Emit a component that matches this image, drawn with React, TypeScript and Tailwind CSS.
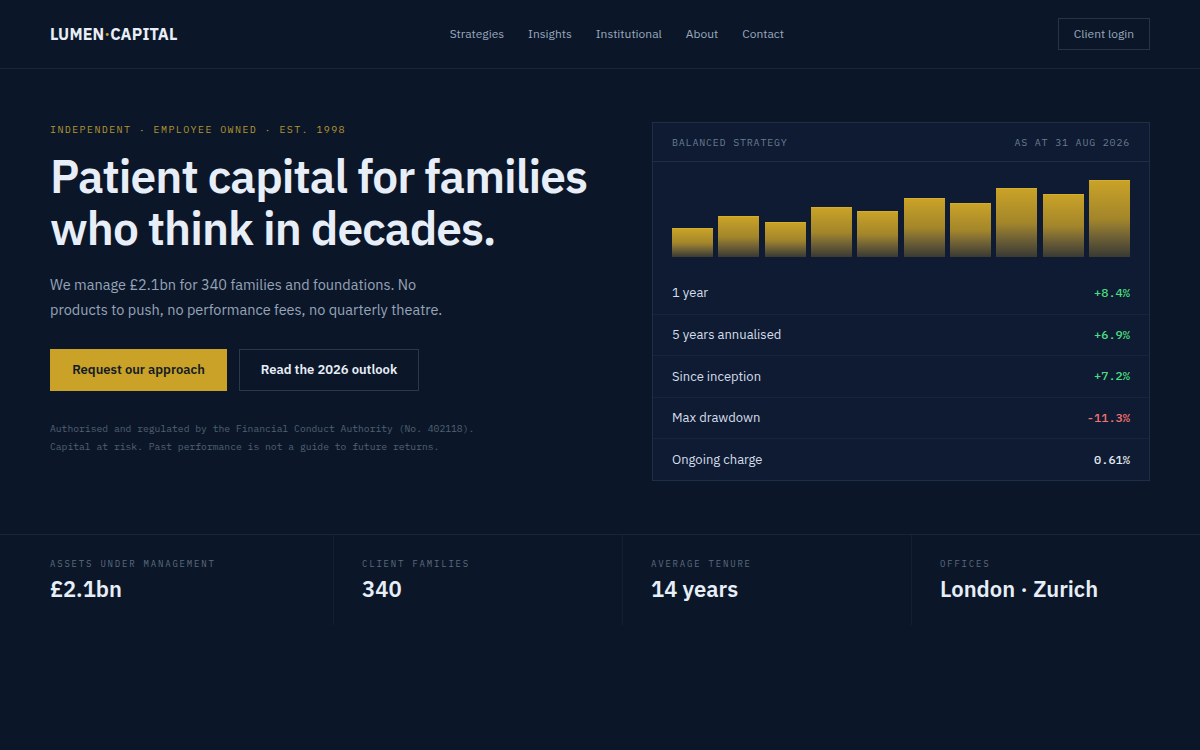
const sans = { fontFamily: '"IBM Plex Sans", Roboto, "Noto Sans", sans-serif' };
const mono = { fontFamily: '"IBM Plex Mono", "DejaVu Sans Mono", "Liberation Mono", monospace' };

const navLinks = ['Strategies', 'Insights', 'Institutional', 'About', 'Contact'];

// monthly bar heights for the balanced strategy chart (px)
const bars = [29, 41, 35, 50, 46, 59, 54, 69, 63, 77];

const returns = [
  { label: '1 year', value: '+8.4%', tone: 'text-[#4ade80]' },
  { label: '5 years annualised', value: '+6.9%', tone: 'text-[#4ade80]' },
  { label: 'Since inception', value: '+7.2%', tone: 'text-[#4ade80]' },
  { label: 'Max drawdown', value: '-11.3%', tone: 'text-[#f87171]' },
  { label: 'Ongoing charge', value: '0.61%', tone: 'text-[#e2e8f0]' },
];

const stats = [
  { label: 'Assets under management', value: '£2.1bn' },
  { label: 'Client families', value: '340' },
  { label: 'Average tenure', value: '14 years' },
  { label: 'Offices', value: 'London · Zurich' },
];

function Header() {
  return (
    <header className="h-[69px] border-b border-[#1a2638] flex items-center px-[50px]">
      <div className="text-[16px] font-bold tracking-[0.01em] text-[#e8eef7]">
        LUMEN<span className="text-[#c9a227]">·</span>CAPITAL
      </div>
      <nav className="flex items-center gap-[24px] text-[12px] text-[#9aa8bd] ml-[272px]">
        {navLinks.map((l) => (
          <a key={l} href="#" className="hover:text-white">
            {l}
          </a>
        ))}
      </nav>
      <button className="ml-auto h-[32px] w-[92px] border border-[#26344a] text-[12px] text-[#9aa8bd]">
        Client login
      </button>
    </header>
  );
}

function StrategyCard() {
  return (
    <div className="w-[498px] self-start border border-[#1f2e47] bg-[#0e1b32]">
      <div className="h-[39px] flex items-center justify-between px-[19px] border-b border-[#1f2e47] text-[10px] tracking-[0.08em] text-[#6b7a90]" style={mono}>
        <span>BALANCED STRATEGY</span>
        <span>AS AT 31 AUG 2026</span>
      </div>
      <div className="h-[110px] px-[19px] pt-[17px] pb-[15px] flex items-end gap-[5.5px]">
        {bars.map((h, i) => (
          <div
            key={i}
            className="flex-1 border-t border-[#d4ad2c] bg-gradient-to-b from-[#c9a227] via-[#a3862a] to-[#3a3a33]"
            style={{ height: h }}
          />
        ))}
      </div>
      {returns.map((r, i) => (
        <div
          key={r.label}
          className={`h-[41.6px] flex items-center justify-between px-[19px] ${i > 0 ? 'border-t border-[#17243a]' : ''}`}
        >
          <span className="text-[13px] text-[#d5deea]">{r.label}</span>
          <span className={`text-[12px] font-medium ${r.tone}`} style={mono}>
            {r.value}
          </span>
        </div>
      ))}
    </div>
  );
}

function Hero() {
  return (
    <section className="flex items-start justify-between px-[50px] pt-[53px] h-[465px]">
      <div className="w-[560px]">
        <div className="text-[10px] tracking-[0.14em] text-[#b4952f]" style={mono}>
          INDEPENDENT · EMPLOYEE OWNED · EST. 1998
        </div>
        <h1 className="mt-[13px] text-[46px] leading-[52px] font-semibold tracking-[-0.02em] text-[#e8eef7]">
          Patient capital for families
          <br />
          who think in decades.
        </h1>
        <p className="mt-[18px] text-[14.5px] leading-[25px] text-[#97a4b8] w-[400px]">
          We manage £2.1bn for 340 families and foundations. No products to push, no performance fees, no quarterly theatre.
        </p>
        <div className="mt-[27px] flex gap-[12px]">
          <button className="h-[42px] w-[177px] bg-[#c9a227] text-[13px] font-semibold text-[#131a26]">
            Request our approach
          </button>
          <button className="h-[42px] w-[180px] border border-[#2a384e] text-[13px] font-semibold text-[#e8eef7]">
            Read the 2026 outlook
          </button>
        </div>
        <p className="mt-[29px] text-[9.7px] leading-[18px] text-[#526073]" style={mono}>
          Authorised and regulated by the Financial Conduct Authority (No. 402118).
          <br />
          Capital at risk. Past performance is not a guide to future returns.
        </p>
      </div>
      <StrategyCard />
    </section>
  );
}

function Stats() {
  return (
    <section className="border-t border-[#1a2638] grid grid-cols-4 pl-[44px]">
      {stats.map((s, i) => (
        <div
          key={s.label}
          className={`h-[90px] pt-[22px] ${i === 0 ? 'pl-[6px]' : 'pl-[28px] border-l border-[#141f31]'}`}
        >
          <div className="text-[9px] tracking-[0.2em] uppercase text-[#5d6a7e]" style={mono}>
            {s.label}
          </div>
          <div className="mt-[1px] text-[22px] font-semibold text-[#e8eef7]">{s.value}</div>
        </div>
      ))}
    </section>
  );
}

export default function App() {
  return (
    <div className="min-h-[750px] w-full bg-[#0b1729]" style={sans}>
      <Header />
      <Hero />
      <Stats />
    </div>
  );
}
